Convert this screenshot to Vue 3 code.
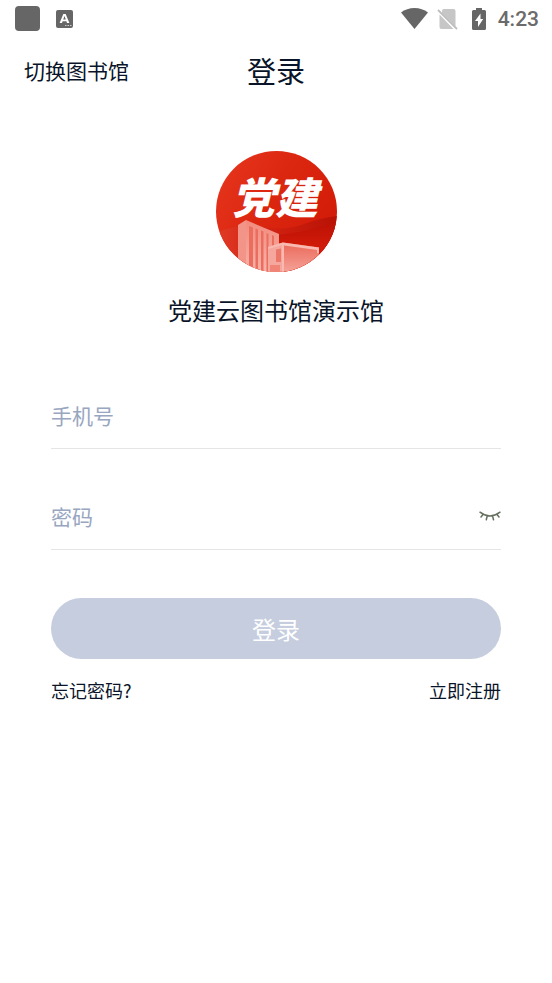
<script setup>
import { ref } from 'vue'

const phone = ref('')
const password = ref('')
const visible = ref(false)
</script>

<template>
  <div class="screen">
    <div class="status">
      <div class="status-group">
        <span class="app-dot"></span>
        <svg class="ime" viewBox="0 0 17 18" aria-hidden="true">
          <rect width="17" height="18" rx="2" fill="#666" />
          <path d="M3.600 13 7.300 4h2.400l3.700 9h-2.400l-.6-1.700H6.600L6 13zM7.200 9.600h2.600L8.500 6z" fill="#fff" />
          <path d="M9 15.500h1.500M11.500 15.500H13M14 15.500h1.500" stroke="#ccc" stroke-width="1" />
        </svg>
      </div>
      <div class="status-group right">
        <svg class="wifi" viewBox="0 0 27 21" aria-hidden="true">
          <path d="M0 4.500Q5.800 0 13.500 0T27 4.500L13.500 21z" fill="#666" />
        </svg>
        <svg class="sim" viewBox="0 0 21 22" aria-hidden="true">
          <path d="M7 1h9.500q2 0 2 2v15.500L5 5V3q0-2 2-2zM2.500 6.500 16.500 21h-12q-2 0-2-2z" fill="#c6c6c6" />
          <path d="M1 2 20 21" stroke="#bdbdbd" stroke-width="1.800" />
        </svg>
        <svg class="battery" viewBox="0 0 14 22" aria-hidden="true">
          <path d="M4 0h6v2h2.500Q14 2 14 3.500v17q0 1.500-1.500 1.500h-11Q0 22 0 20.500v-17Q0 2 1.500 2H4z" fill="#666" />
          <path d="M8.500 5.500 3 13h3v6l5.200-8H8.500z" fill="#fff" />
        </svg>
        <span class="clock">4:23</span>
      </div>
    </div>

    <header class="header">
      <button type="button" class="switch">切换图书馆</button>
      <h1 class="title">登录</h1>
    </header>

    <main class="main">
      <svg class="logo" viewBox="0 0 121 121" role="img" aria-label="党建">
        <defs>
          <clipPath id="disc"><circle cx="60.500" cy="60.500" r="60.500" /></clipPath>
          <linearGradient id="red" x1="0" y1="0" x2="1" y2="0.600">
            <stop offset="0" stop-color="#e7371f" />
            <stop offset="0.500" stop-color="#dc2710" />
            <stop offset="1" stop-color="#d21b08" />
          </linearGradient>
          <linearGradient id="wave" x1="0" y1="0" x2="1" y2="0">
            <stop offset="0" stop-color="#e03a25" />
            <stop offset="0.500" stop-color="#cf2010" />
            <stop offset="1" stop-color="#b81205" />
          </linearGradient>
          <linearGradient id="fold" x1="0" y1="0" x2="0" y2="1">
            <stop offset="0" stop-color="#bd1206" />
            <stop offset="0.450" stop-color="#d01a09" />
            <stop offset="1" stop-color="#d81e0c" />
          </linearGradient>
          <linearGradient id="tower" x1="0" y1="0" x2="0" y2="1">
            <stop offset="0" stop-color="#f28a7d" />
            <stop offset="1" stop-color="#f8b3aa" />
          </linearGradient>
          <linearGradient id="facade" x1="0" y1="0" x2="0" y2="1">
            <stop offset="0" stop-color="#ea6859" />
            <stop offset="1" stop-color="#f5a298" />
          </linearGradient>
        </defs>
        <g clip-path="url(#disc)">
          <rect width="121" height="121" fill="url(#red)" />
          <path d="M0 82Q22 72 46 76T88 73Q104 67 121 65V121H0z" fill="url(#wave)" />
          <path d="M60 84Q84 82 99 77T121 73V121H60z" fill="url(#fold)" />
          <path d="M22 74 30 69V121H22z" fill="#f29488" />
          <path d="M30 69 63 83V121H30z" fill="url(#tower)" />
          <path d="M33 75 37 76.500V121H33zM39.500 77.500 42 78.500V121H39.500zM45 79.500 47.500 80.500V121H45zM50.500 82 52.500 83V121H50.500zM56 84 58 85V121H56z" fill="#eb6d5e" />
          <path d="M52 96 67 91.500V121H52z" fill="#f6a79d" />
          <path d="M67 91.500 103 96.500V121H67z" fill="url(#facade)" />
          <path d="M52 96 67 91.500 103 96.500V102H101V99L68 94.500V121H66V94L52 98z" fill="#f9b9b1" />
          <path d="M60 98.500 65 97.500V111H60z" fill="#ec7768" />
          <path d="M54 114h10v7h-10z" fill="#ef8477" />
        </g>
        <text x="59" y="63" text-anchor="middle" class="logo-text">党建</text>
      </svg>
      <p class="name">党建云图书馆演示馆</p>

      <form class="form" @submit.prevent>
        <div class="field">
          <input v-model="phone" type="tel" placeholder="手机号" aria-label="手机号" />
        </div>
        <div class="field">
          <input v-model="password" :type="visible ? 'text' : 'password'" placeholder="密码" aria-label="密码" />
          <button type="button" class="eye" aria-label="显示密码" @click="visible = !visible">
            <svg viewBox="0 0 22 10" aria-hidden="true">
              <path d="M1 1.200Q11 9 21 1.200M4 3.600 2 6M8.200 5 7.300 8.700M13.600 5l.9 3.700M18 3.600 20 6" fill="none" stroke="#66705f" stroke-width="1.500" stroke-linecap="round" />
            </svg>
          </button>
        </div>
        <button type="submit" class="submit">登录</button>
      </form>

      <nav class="links">
        <a href="#forgot">忘记密码?</a>
        <a href="#register">立即注册</a>
      </nav>
    </main>
  </div>
</template>

<style>
body {
  margin: 0;
  background: #fff;
}
</style>

<style scoped>
.screen {
  min-height: 100vh;
  background: #fff;
  color: #091428;
  font-family: "Noto Sans CJK SC", sans-serif;
}

button,
input {
  padding: 0;
  border: 0;
  background: none;
  color: inherit;
  font-family: inherit;
}

svg {
  display: block;
}

.status {
  display: flex;
  justify-content: space-between;
  align-items: center;
  height: 37px;
  padding: 0 13px 0 15px;
}

.status-group {
  display: flex;
  align-items: center;
  gap: 16px;
}

.status-group.right {
  gap: 12px;
}

.app-dot {
  width: 25px;
  height: 25px;
  border-radius: 4px;
  background: #666;
}

.ime {
  width: 17px;
  height: 18px;
}

.wifi {
  width: 27px;
  height: 21px;
}

.sim {
  width: 21px;
  height: 22px;
  margin: 0 2px 0 -3px;
}

.battery {
  width: 14px;
  height: 22px;
}

.clock {
  color: #6b6b6b;
  font: 500 21px/24px Roboto, sans-serif;
}

.header {
  display: grid;
  grid-template-columns: 1fr auto 1fr;
  align-items: center;
  height: 66px;
  padding: 0 24px;
}

.switch {
  justify-self: start;
  font-size: 21px;
  line-height: 32px;
}

.title {
  margin: 0;
  font-size: 29px;
  font-weight: 400;
  line-height: 40px;
}

.main {
  padding: 48px 51px 0;
}

.logo {
  width: 121px;
  height: 121px;
  margin: 0 auto;
}

.logo-text {
  fill: #fff;
  font-size: 43px;
  font-style: italic;
  font-weight: 900;
}

.name {
  margin: 20px 0 0;
  font-size: 24px;
  line-height: 36px;
  text-align: center;
}

.form {
  padding-top: 20px;
}

.field {
  display: flex;
  align-items: center;
  height: 61px;
  margin-top: 36px;
  padding-bottom: 3px;
  border-bottom: 1px solid #e5e5e5;
}

.field input {
  flex: 1;
  min-width: 0;
  height: 32px;
  outline: 0;
  font-size: 21px;
}

.field input::placeholder {
  color: #98a6bf;
  opacity: 1;
}

.eye svg {
  width: 22px;
  height: 10px;
}

.submit {
  display: block;
  width: 100%;
  height: 61px;
  margin-top: 48px;
  border-radius: 31px;
  background: #c5cdde;
  color: #fff;
  font-size: 24px;
}

.links {
  display: flex;
  justify-content: space-between;
  margin-top: 17px;
  font-size: 18px;
  line-height: 28px;
}

.links a {
  color: inherit;
  text-decoration: none;
}
</style>
